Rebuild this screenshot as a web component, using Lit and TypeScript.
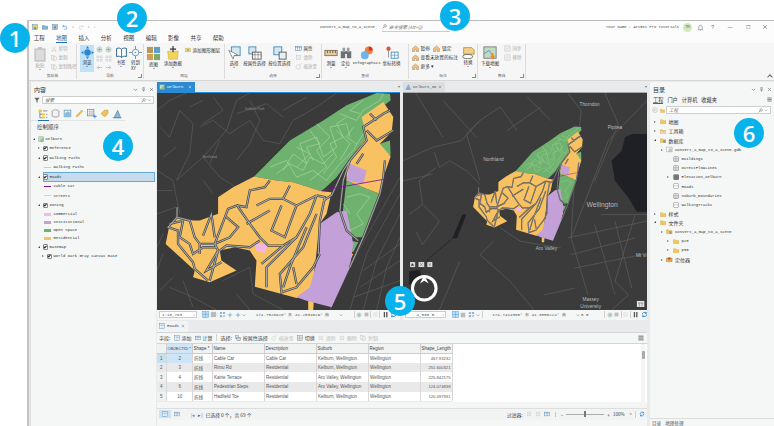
import { LitElement, html, css, svg, nothing } from "lit";
import { customElement } from "lit/decorators.js";

const I: Record<string, any> = {
  paste: svg`<rect x="3" y="3" width="10" height="12" fill="#dcdcdc" stroke="#b5b5b5"/><rect x="6" y="1" width="4" height="3" fill="#c4c4c4"/>`,
  cut: svg`<path d="M4 2l8 10M12 2L4 12" stroke="#bbb" fill="none"/><circle cx="4" cy="13" r="2" fill="none" stroke="#bbb"/><circle cx="12" cy="13" r="2" fill="none" stroke="#bbb"/>`,
  copy: svg`<rect x="2" y="2" width="8" height="10" fill="#eee" stroke="#bbb"/><rect x="6" y="5" width="8" height="10" fill="#eee" stroke="#bbb"/>`,
  explore: svg`<circle cx="8" cy="8" r="4" fill="#2c86d1"/><path d="M8 0l2 3H6zM8 16l2-3H6zM0 8l3-2v4zM16 8l-3-2v4z" fill="#2c86d1"/>`,
  zoomc: svg`<circle cx="8" cy="8" r="6" fill="#cfe3d3" stroke="#9bb"/><path d="M8 5v6M5 8h6" stroke="#777"/>`,
  dots: svg`<path d="M2 2h4v4H2zM10 2h4v4h-4zM2 10h4v4H2zM10 10h4v4h-4z" fill="none" stroke="#777" stroke-dasharray="1 1"/>`,
  left: svg`<path d="M14 8H3M7 4L3 8l4 4" fill="none" stroke="#aaa" stroke-width="1.5"/>`,
  right: svg`<path d="M2 8h11M9 4l4 4-4 4" fill="none" stroke="#aaa" stroke-width="1.5"/>`,
  book: svg`<path d="M2 3c3-1 5 0 6 1 1-1 3-2 6-1v10c-3-1-5 0-6 1-1-1-3-2-6-1z" fill="#fff" stroke="#27628f" stroke-width="1.2"/><path d="M8 4v10" stroke="#27628f"/>`,
  goto: svg`<circle cx="8" cy="8" r="4" fill="#fff" stroke="#3c8bc8"/><circle cx="8" cy="8" r="1" fill="#3c8bc8"/><path d="M8 0v4M8 12v4M0 8h4M12 8h4" stroke="#777"/>`,
  basemap: svg`<rect x="1" y="1" width="6.5" height="6.5" fill="#b59a5c"/><rect x="8.5" y="1" width="6.5" height="6.5" fill="#5f9ec8"/><rect x="1" y="8.5" width="6.5" height="6.5" fill="#d39c57"/><rect x="8.5" y="8.5" width="6.5" height="6.5" fill="#7fa86a"/>`,
  add: svg`<path d="M2 6h12l-1 9H3z" fill="#f2d45c" stroke="#c7a92f" stroke-width=".6"/><path d="M8 0v7M4.5 3.500h7" stroke="#333" stroke-width="1.3"/>`,
  graphics: svg`<rect x="2" y="3" width="12" height="10" fill="#f5dd7c" stroke="#b89c32"/><rect x="5" y="6" width="6" height="4" fill="#7aa0c5"/>`,
  select: svg`<rect x="5" y="1" width="10" height="10" fill="#d5e8f2" stroke="#3e86b5"/><path d="M2 5l5 10 1-4 4-1z" fill="#fff" stroke="#555" stroke-width=".7"/>`,
  selattr: svg`<rect x="1" y="1" width="8" height="8" fill="#d5e8f2" stroke="#3e86b5"/><rect x="5" y="7" width="10" height="8" fill="#fff" stroke="#555"/><path d="M8 7v8M11.500 7v8M5 10h10" stroke="#555" stroke-width=".6"/>`,
  selloc: svg`<rect x="1" y="1" width="9" height="9" fill="#d5e8f2" stroke="#3e86b5"/><rect x="7" y="7" width="8" height="8" fill="#e6eff4" stroke="#555"/>`,
  attr: svg`<rect x="1" y="3" width="14" height="10" fill="#fff" stroke="#2e6a99"/><path d="M1 6h14M6 3v10M10 3v10" stroke="#2e6a99" stroke-width=".8"/>`,
  clear: svg`<rect x="3" y="3" width="10" height="10" fill="none" stroke="#bbb"/><path d="M5 5l6 6M11 5l-6 6" stroke="#ccc"/>`,
  zoomto: svg`<circle cx="7" cy="9" r="5" fill="none" stroke="#bbb"/><path d="M10 5l5-4" stroke="#bbb"/>`,
  measure: svg`<rect x="1" y="5" width="14" height="6" fill="#e2c7a0" stroke="#8a7154"/><path d="M4 5v3M7 5v3M10 5v3M13 5v3" stroke="#6f5a40"/>`,
  binoc: svg`<rect x="2" y="6" width="5" height="8" fill="#6d7075"/><rect x="9" y="6" width="5" height="8" fill="#6d7075"/><rect x="4" y="2" width="3" height="5" fill="#9a9da2"/><rect x="9" y="2" width="3" height="5" fill="#9a9da2"/><rect x="7" y="6" width="2" height="3" fill="#555"/>`,
  info: svg`<circle cx="10" cy="5" r="4.500" fill="#f0803c"/><path d="M10 5V.5A4.500 4.500 0 0 1 14.500 5z" fill="#c33"/><circle cx="5.500" cy="10.500" r="4.500" fill="#6db2e8"/>`,
  coord: svg`<circle cx="4" cy="3" r="2.500" fill="#d9553c"/><path d="M4 5v8" stroke="#888"/><rect x="7" y="7" width="8" height="7" fill="#fff" stroke="#4a8bb8"/><path d="M11 7v7M7 10.500h8" stroke="#4a8bb8" stroke-width=".7"/>`,
  house: svg`<path d="M1 8l7-6 7 6v7H1z" fill="#f0c27a" stroke="#a9793a"/><path d="M5.500 15v-4h5v4" fill="#fff" stroke="#777"/>`,
  label: svg`<path d="M2 2h10l3 3v5H2z" fill="#f3cf85" stroke="#b58c42"/><ellipse cx="7" cy="13" rx="6" ry="2.600" fill="#fff" stroke="#555"/>`,
  dlmap: svg`<rect x="1" y="1" width="14" height="13" fill="#bfdcc0" stroke="#777"/><path d="M1 9l6-4 4 6" stroke="#5f8dbb" fill="none"/><path d="M11 8v5M9 11l2 3 2-3" stroke="#e98a24" stroke-width="1.600" fill="none"/>`,
  sync: svg`<rect x="2" y="2" width="12" height="12" fill="#eee" stroke="#bbb"/><path d="M4 11l8-6" stroke="#ccc"/>`,
  save: svg`<rect x="2" y="2" width="12" height="12" fill="#f1cf52" stroke="#2c6b9a"/><rect x="5" y="9" width="6" height="5" fill="#4f92c6"/>`,
  open: svg`<path d="M1 4h5l1 2h8v8H1z" fill="#88b6d8" stroke="#2c6b9a"/>`,
  saveas: svg`<rect x="2" y="2" width="12" height="12" fill="#b9bec8" stroke="#3d5f8a"/><circle cx="8" cy="9" r="3" fill="#4f92c6"/>`,
  undo: svg`<path d="M5 3L2 6l3 3M2 6h7a4 4 0 0 1 0 8H6" fill="none" stroke="#2c7fc3" stroke-width="1.500"/>`,
  redo: svg`<path d="M11 3l3 3-3 3M14 6H7a4 4 0 0 0 0 8h3" fill="none" stroke="#bcd0e0" stroke-width="1.500"/>`,
  filter: svg`<path d="M1 2h14L9.500 9v6l-3-2V9z" fill="#666"/>`,
  mag: svg`<circle cx="10" cy="6" r="4" fill="none" stroke="#555" stroke-width="1.500"/><path d="M7 9l-5 5" stroke="#555" stroke-width="1.800"/>`,
  chev: svg`<path d="M3 6l5 5 5-5" fill="none" stroke="#555" stroke-width="1.800"/>`,
  pin: svg`<path d="M5 2h6M6 2v6L4 10h8l-2-2V2M8 10v5" fill="none" stroke="#555" stroke-width="1.400"/>`,
  x: svg`<path d="M3 3l10 10M13 3L3 13" stroke="#555" stroke-width="1.500"/>`,
  xw: svg`<path d="M3 3l10 10M13 3L3 13" stroke="#fff" stroke-width="1.800"/>`,
  bell: svg`<path d="M4 11V7a4 4 0 0 1 8 0v4l1 2H3zM7 14h2" fill="none" stroke="#666" stroke-width="1.200"/>`,
  tree: svg`<rect x="1" y="1" width="5" height="4" fill="#f1c232"/><rect x="6" y="7" width="5" height="3" fill="#f1c232"/><rect x="6" y="12" width="5" height="3" fill="#f1c232"/><path d="M3 5v9h3M3 8.500h3" stroke="#555" fill="none"/><path d="M8 3h7M13 8.500h2M13 13.500h2" stroke="#555"/>`,
  cyl: svg`<ellipse cx="8" cy="4" rx="6" ry="2.500" fill="#fff" stroke="#666"/><path d="M2 4v8c0 3 12 3 12 0V4" fill="#f2f2f2" stroke="#666"/>`,
  mapdoc: svg`<rect x="2" y="2" width="12" height="12" fill="#eaf3f9" stroke="#3e7ea8"/><path d="M2 9l6-5 6 3v7H2z" fill="#8dbbd8"/>`,
  pen: svg`<path d="M2 14l1-3 9-9 2 2-9 9z" fill="#f1c232" stroke="#a9871c" stroke-width=".6"/>`,
  gridadd: svg`<rect x="1" y="1" width="10" height="10" fill="#fff" stroke="#777"/><path d="M4.500 1v10M8 1v10M1 4.500h10M1 8h10" stroke="#777" stroke-width=".6"/><path d="M12.500 9v6M9.500 12h6" stroke="#3a8ad0" stroke-width="1.400"/>`,
  tag: svg`<path d="M2 8l6-6h6v6l-6 6z" fill="#f0c45c" stroke="#b88e2a"/>`,
  snap: svg`<path d="M3 14L9 2l5 12z" fill="#8bb5d6" stroke="#37658c" stroke-width=".7"/><path d="M1 14h14" stroke="#777"/>`,
  layer: svg`<rect x="2" y="2" width="12" height="12" fill="#cfe6cc" stroke="#7a8f7a"/><path d="M2 14L14 2v12z" fill="#8fc08a"/><path d="M4 5h4" stroke="#4f92c6"/>`,
  folder: svg`<path d="M1 4h5l1 2h8v8H1z" fill="#f1c75b" stroke="#c39a2e" stroke-width=".7"/>`,
  folderc: svg`<path d="M1 4h5l1 2h8v8H1z" fill="#f1c75b" stroke="#c39a2e" stroke-width=".7"/><rect x="3" y="8" width="10" height="5" fill="#fff"/><rect x="4" y="9" width="8" height="1.500" fill="#c94d3d"/>`,
  folderg: svg`<path d="M1 4h5l1 2h8v8H1z" fill="#f1c75b" stroke="#c39a2e" stroke-width=".7"/><circle cx="11" cy="11" r="3.500" fill="#999"/>`,
  gdb: svg`<path d="M1 3h14v11H1z" fill="#fff" stroke="#777"/><circle cx="10" cy="10" r="3.500" fill="#ddd" stroke="#777"/>`,
  tbl: svg`<rect x="2" y="2" width="12" height="12" fill="#eee" stroke="#666"/><path d="M2 6h12M2 10h12M7 2v12" stroke="#888"/>`,
  raster: svg`<rect x="2" y="2" width="12" height="12" fill="#777" stroke="#444"/>`,
  line: svg`<rect x="2" y="2" width="12" height="12" fill="#fff" stroke="#666"/><path d="M2 7h12" stroke="#777"/>`,
  locator: svg`<path d="M1 5h14v9H1z" fill="#d9b04c" stroke="#9c7a26"/><circle cx="8" cy="6" r="3" fill="#cf4a3a"/>`,
  back: svg`<circle cx="8" cy="8" r="6.500" fill="none" stroke="#999"/><path d="M11 8H5M8 5L5 8l3 3" fill="none" stroke="#999"/>`,
  tblicon: svg`<rect x="1" y="2" width="14" height="12" fill="#fff" stroke="#3c7aa8"/><path d="M1 6h14M6 2v12M10.500 2v12" stroke="#3c7aa8" stroke-width=".8"/>`,
  menu: svg`<path d="M1 3h14M1 8h14M1 13h14" stroke="#555" stroke-width="2.200"/>`,
  refresh: svg`<path d="M3 8a5 5 0 0 1 9-3M13 8a5 5 0 0 1-9 3" fill="none" stroke="#2a85d0" stroke-width="2"/><path d="M13 1v5H8zM3 15v-5h5z" fill="#2a85d0"/>`,
  pause: svg`<path d="M4 2h3v12H4zM9.500 2h3v12h-3z" fill="#555"/>`,
  tile: svg`<rect x="1" y="1" width="14" height="14" fill="#bcdcf3" stroke="#4f9bd6"/><path d="M8 1v14M1 8h14" stroke="#4f9bd6"/>`,
  sq: svg`<rect x="2" y="2" width="12" height="12" fill="#bbb"/>`,
  grid3: svg`<path d="M2 2h5v5H2zM9 2h5v5H9zM2 9h5v5H2z" fill="#8fb6d2"/><path d="M9 9h5v5H9z" fill="#bcd"/>`,
  nav: svg`<path d="M2 8h12M8 2v12" stroke="#5a8fb5" stroke-width="1.600"/>`,
  sbar: svg`<rect x="7" y="0" width="2" height="16" fill="#d4a64a"/>`,
};

const icon = (n: string, s = 8) => html`<svg class="ic" style="width:${s}px;height:${s}px" viewBox="0 0 16 16">${I[n]}</svg>`;

const POLY = {
  green: ["313,288 420,180 520,120 590,75 680,38 720,40 722,60 640,125 650,170 600,235 560,290 515,332 430,305 380,300",
    "590,300 650,325 690,340 640,470 600,470 578,400 585,340", "600,480 625,485 610,515 580,500", "690,190 720,180 722,225 700,225",
    "172,440 190,405 180,445"],
  orange: ["205,350 250,320 313,288 380,300 430,305 515,332 545,335 530,400 510,430 485,640 440,652 315,618 320,540 300,510 255,500 210,510 215,540 260,570 180,605 130,590 135,570 48,490 60,430 85,410 130,420 150,420 205,400",
    "635,110 700,65 730,110 725,155 690,190 722,228 700,290 690,340 650,325 590,300 590,250 650,170",
    "590,515 610,520 595,552 583,548", "475,660 492,660 490,688 475,688"],
  purple: ["510,430 560,395 590,390 610,490 600,560 545,680 470,660 440,650 480,620 510,510", "600,250 650,270 640,310 590,300"],
  pink: ["315,490 355,490 345,518 320,510"],
};

const ROADS = [
  "M82,380 L82,410 L120,420 L135,470 L150,490 L195,490 L235,385 L262,375 L300,430 L330,470 L355,495 L400,495 L440,470 L480,400 L500,345",
  "M82,410 L55,440 L85,450 L85,490 L130,545 L135,565 L175,600",
  "M262,375 L290,380 L300,330 L345,320 L360,300",
  "M320,375 L360,355 L400,355 L440,375 L405,470 L365,450 L395,375",
  "M420,315 L400,355 M440,375 L500,345 M290,430 L360,390",
  "M195,490 L205,510 L170,570 L215,545 M160,465 L185,400 L195,470",
  "M230,410 L265,440 L240,470 L195,490",
  "M500,400 L460,500 L390,580 L395,635 L440,620 L490,560 L510,520",
  "M440,470 L350,560 L350,620 M335,550 L400,495",
  "M500,345 L525,350 L510,420 L505,520",
  "M600,240 L580,300 L570,390 L590,450 L625,480",
  "M600,240 L650,180 L640,140 L700,100 L720,90 M650,150 L680,180 L730,150 M660,100 L680,120",
  "M640,220 L620,250 M705,240 L700,290 L690,340 L640,470 L600,560",
  "M60,430 L100,420 L90,470 L120,490 L130,520 L160,500 L200,500",
  "M470,440 L445,500 L420,560 L400,620 M430,560 L440,610",
  "M520,360 L545,345 L580,270 L600,240",
  "M210,510 L230,495 L300,500 L330,480 M150,490 L150,520 M205,510 L180,600",
];

const TRAILS = [
  "M400,270 L430,220 L470,250 L450,190 L500,170 L520,230 L560,200 L540,140 L590,130 L600,170",
  "M360,260 L410,240 L440,290 L490,270 L530,300 L570,250 L610,210 L640,160",
  "M500,130 L540,170 L500,210 L530,260 L480,300 M570,100 L620,120 L640,90 L690,60 L700,40",
  "M590,350 L630,340 L660,350 L620,400 L640,430 L600,450 M600,400 L580,370",
  "M440,200 L480,220 L440,260 M560,150 L600,190 L570,240",
  "M380,280 L420,250 L460,270 L480,230 L520,250 L550,220 M480,150 L510,190 L470,200 L490,240 M610,140 L590,170 L620,190",
  "M640,60 L600,90 L630,100 M590,110 L560,130 L580,170 L540,190 L560,230 L520,280",
];

const shapes = () => svg`
  ${POLY.green.map((p) => svg`<polygon points=${p} fill="#6fb26f"/>`)}
  ${POLY.orange.map((p) => svg`<polygon points=${p} fill="#f8c161"/>`)}
  ${POLY.purple.map((p) => svg`<polygon points=${p} fill="#c4a0d8"/>`)}
  ${POLY.pink.map((p) => svg`<polygon points=${p} fill="#f3b6e2"/>`)}
  ${TRAILS.map((d) => svg`<path d=${d} fill="none" stroke="#b3e0a6" stroke-width="1.600"/>`)}
  ${ROADS.map((d) => svg`<path d=${d} fill="none" stroke="#444" stroke-width="7"/>`)}
  ${ROADS.map((d) => svg`<path d=${d} fill="none" stroke="#a8aaac" stroke-width="3"/>`)}
  <path d="M515,330 L710,295" stroke="#7f0f9e" stroke-width="2.500"/>
`;

const BG1 = [
  "M22,270 L70,300 L90,400 M80,300 L160,230 L230,150 L260,60 L300,38",
  "M160,230 L210,290 L260,320 M30,140 L60,170 L90,90 L130,130 L120,220 L80,300",
  "M150,140 L190,120 L240,160 L300,120 L340,180 L390,190 L430,120 L500,80 L560,38",
  "M300,60 L330,120 L300,190 L260,240 M190,50 L220,90 L160,130",
  "M22,330 L70,330 M22,400 L80,380 M40,520 L22,570 M60,620 L130,650 L200,688",
  "M220,600 L300,560 L310,640 L400,688 M260,640 L300,688",
  "M750,290 L620,520 L540,688 M750,340 L650,520 L600,688 M750,400 L680,540 L640,688 M750,470 L710,560 L680,688 M630,620 L750,540 M640,570 L750,490 M610,650 L750,600",
  "M400,90 L470,50 M80,200 L40,230 M120,80 L160,60 M22,90 L60,60 L110,38",
  "M210,180 L180,250 M260,100 L350,70 L400,110 M160,300 L190,340 M40,460 L22,500",
  "M100,600 L130,680 M30,630 L70,590",
];
const BG2 = [
  "M12,240 L100,200 L185,180 L240,120 L300,80 L350,150 M240,120 L200,160 L240,300",
  "M105,215 L120,260 L150,240 L200,270 L240,310 M12,300 L100,280 M50,38 L130,170 M130,60 L230,170",
  "M110,260 L60,300 L70,370 L30,400 M70,370 L120,420 L70,490 L50,450",
  "M500,38 L540,90 L520,300 L510,470 L560,640 M735,60 L620,180 L560,340 L510,470",
  "M610,38 L650,130 L580,300 M500,470 L735,420 M510,520 L700,470 M520,560 L720,520 M600,400 L735,400 M580,430 L640,640 M640,420 L690,620 M700,400 L640,600 L680,640 L630,685",
  "M300,440 L360,480 L480,500 M280,480 L240,520 L330,600 L400,685 M430,640 L520,620 M180,540 L120,685",
  "M380,50 L450,120 M320,150 L420,80",
];

const SVG1 = () => html`<svg class="mapsvg" viewBox="22 38 728 650" preserveAspectRatio="none">
  ${BG1.map((d) => svg`<path d=${d} fill="none" stroke="#5e5e5e" stroke-width="2"/>`)}
  <text x="315" y="90" class="mlab" text-anchor="middle">Kelburn Park</text>
  <text x="180" y="232" class="mlab" text-anchor="middle">Northland</text>
  ${shapes()}
</svg>`;

const SVG2 = () => html`<svg class="mapsvg" viewBox="12 38 723 647" preserveAspectRatio="none">
  <polygon points="630,240 660,210 670,170 690,160 735,160 735,392 705,392 680,350 640,300" fill="#1f1f26"/>
  <polygon points="188,400 200,400 172,470 158,472" fill="#1f1f26"/>
  <polygon points="30,570 60,566 70,590 30,610" fill="#1f1f26"/>
  <path d="M158,472 L90,530 L60,570" stroke="#1f1f26" stroke-width="2" fill="none"/>
  ${BG2.map((d) => svg`<path d=${d} fill="none" stroke="#585858" stroke-width="2.400"/>`)}
  <g transform="translate(197,118) scale(.476,.53)">${shapes()}</g>
  <text x="565" y="77" class="mlab2" text-anchor="middle">Thorndon</text>
  <text x="640" y="146" class="mlab2" text-anchor="middle">Pipitea</text>
  <text x="280" y="242" class="mlab2" text-anchor="middle">Northland</text>
  <text x="602" y="379" class="mlab3" text-anchor="middle">Wellington</text>
  <text x="437" y="505" class="mlab2" text-anchor="middle">Aro Valley</text>
  <text x="718" y="526" class="mlab2" text-anchor="middle">Mt Vi</text>
  <text x="568" y="657" class="mlab2" text-anchor="middle">Massey</text>
  <text x="568" y="678" class="mlab2" text-anchor="middle">University</text>
  <rect x="33" y="542" width="15" height="15" fill="#ddd"/><rect x="58" y="542" width="17" height="15" fill="#ddd"/><rect x="84" y="542" width="15" height="15" fill="#ddd"/>
  <path d="M36,552 l4,-6 4,6z M62,545 l9,9 M71,545 l-9,9 M88,546 l7,7 M95,546 l-7,7" stroke="#333" fill="#333" stroke-width="1"/>
  <circle cx="75" cy="620" r="35" fill="none" stroke="#fff" stroke-width="9"/>
  <path d="M75,582 L62,606 L75,598 L88,606z" fill="#fff"/>
  <rect x="705" y="658" width="22" height="18" fill="#e5e5e5"/><path d="M708,664 h16 M712,664 v11 M720,664 v11" stroke="#555" stroke-width="1.500"/>
</svg>`;

const layers: any[] = [
  ["c", 1, "Kelburn"],
  ["r", 6, "Reference"],
  ["e", 6, "Walking Paths"],
  ["l", "#b5dca8", "Walking Paths", "line"],
  ["e", 6, "Roads", "sel"],
  ["l", "#7f0f9e", "Cable Car", "line"],
  ["l", "#cfd0d0", "Streets", "line"],
  ["e", 6, "Zoning"],
  ["l", "#f8b8e6", "Commercial", "box"],
  ["l", "#c4a0d8", "Institutional", "box"],
  ["l", "#6fb26f", "Open Space", "box"],
  ["l", "#f8c161", "Residential", "box"],
  ["e", 6, "Basemap"],
  ["r", 10, "World Dark Gray Canvas Base"],
];

const cat: any[] = [
  [0, "r", "folder", "地图"], [0, "r", "folderc", "工具箱"], [0, "d", "folderg", "数据库"],
  [1, "r", "gdb", "Convert_a_map_to_a_scene.gdb", 1],
  [2, "", "tbl", "Buildings", 1], [2, "", "tbl", "DirectFlowLines", 1], [2, "r", "raster", "Elevation_Kelburn", 1],
  [2, "", "line", "Roads", 1], [2, "", "tbl", "Suburb_Boundaries", 1], [2, "", "line", "WalkingTracks", 1],
  [0, "r", "folder", "样式", 0, 1], [0, "d", "folder", "文件夹"],
  [1, "r", "folderg", "Convert_a_map_to_a_scene", 1],
  [2, "r", "folder", "p20", 1], [2, "r", "folder", "p30", 1],
  [1, "r", "locator", "定位器"],
];

const rows = [
  ["1", "2", "折线", "Cable Car", "Cable Car", "Kelburn, Wellington", "Wellington", "467.93232"],
  ["2", "3", "折线", "Rimu Rd", "Residential", "Kelburn, Wellington", "Wellington", "251.600321"],
  ["3", "4", "折线", "Kairie Terrace", "Residential", "Aro Valley, Wellington", "Wellington", "225.842175"],
  ["4", "6", "折线", "Pedestrian Steps", "Residential", "Aro Valley, Wellington", "Wellington", "124.074838"],
  ["5", "10", "折线", "Hadfield Tce", "Residential", "Kelburn, Wellington", "Wellington", "120.497931"],
];

@customElement("app-root")
export class AppRoot extends LitElement {
  static styles = css`
    :host { display: block; width: 774px; height: 426px; overflow: hidden; position: relative; background: #fff;
      font-family: "Liberation Sans", "Noto Sans CJK SC", sans-serif; color: #444; }
    .ic { display: block; flex: none; }
    .win { position: absolute; left: 27px; top: 20px; right: 0; bottom: 0; border-top: 1px solid #bcbcbc; border-left: 2px solid #c4c4c4;
      display: flex; flex-direction: column; background: #e8eaec; }
    .title { height: 12px; display: flex; align-items: center; background: #fcfcfc; padding-left: 3px; font: 3.800px "Liberation Mono", monospace; color: #444; flex: none; }
    .qa { display: flex; gap: 4px; align-items: center; width: 288px; flex: none; }
    .doc { width: 62px; flex: none; white-space: nowrap; }
    .search { width: 68px; height: 9px; border-bottom: 1px solid #ccc; display: flex; align-items: center; gap: 2px; font: italic 4.500px "Noto Sans CJK SC", sans-serif; color: #777; flex: none; }
    .user { margin-left: auto; display: flex; align-items: center; white-space: nowrap; }
    .avatar { width: 9px; height: 9px; border-radius: 50%; background: #d4e8bd; font: 3.500px "Liberation Sans", sans-serif; display: grid; place-items: center; color: #456; margin: 0 5px 0 4px; }
    .winbtn { width: 17.500px; display: grid; place-items: center; font: 5px "Liberation Sans", sans-serif; color: #666; }
    .tabs { height: 10px; flex: none; display: flex; background: #fcfcfc; font: 5.500px "Noto Sans CJK SC", sans-serif; color: #333; align-items: center; }
    .tabs span { width: 22.400px; text-align: center; line-height: 8px; position: relative; flex: none; }
    .tabs span.first { margin-left: -1px; }
    .tabs span.on { color: #1d5f98; }
    .tabs span.on::after { content: ""; position: absolute; left: 6px; right: 6px; bottom: -1px; height: 1px; background: #1b6fb8; }
    .ribbon { height: 37px; flex: none; display: flex; background: #f6f6f6; border-bottom: 1px solid #d6d6d6; position: relative; font: 5px "Noto Sans CJK SC", sans-serif; color: #333; }
    .grp { flex: none; border-right: 1px solid #dcdcdc; display: flex; flex-direction: column; margin: 1px 0; position: relative; }
    .gbody { flex: 1; display: flex; gap: 2px; padding: 1px 2px 0; min-height: 0; }
    .glabel { height: 6px; line-height: 6px; text-align: center; font-size: 3.800px; color: #666; }
    .launch { position: absolute; right: 1px; bottom: 1px; width: 3px; height: 3px; border-right: 1px solid #888; border-bottom: 1px solid #888; }
    .big { display: flex; flex-direction: column; align-items: center; width: 18px; font-size: 4.500px; line-height: 6px; flex: none; white-space: nowrap; padding-top: 1px; }
    .big.sel { background: #bfe2f7; height: 26px; width: 14px; }
    .big.dis { color: #aaa; }
    .car { width: 0; height: 0; border: 1.500px solid transparent; border-top-color: #666; border-bottom: 0; margin-top: 1px; }
    .col { display: flex; flex-direction: column; gap: 1.500px; font-size: 4.500px; line-height: 7px; white-space: nowrap; }
    .item { display: flex; align-items: center; gap: 1.500px; height: 7.500px; }
    .item.dis { color: #aaa; }
    .gridn { display: grid; grid-template-columns: 7px 7px; gap: 2px; align-content: start; padding-top: 1px; margin-right: 1px; }
    .colla { position: absolute; right: 2px; bottom: 1px; width: 3px; height: 3px; border-left: 1px solid #666; border-top: 1px solid #666; transform: rotate(45deg); }

    .work { flex: 1; min-height: 0; display: flex; padding-top: 1px; }
    .panel { background: #f5f6f6; display: flex; flex-direction: column; flex: none; }
    .left { width: 125px; margin-left: 1px; border-left: 1px solid #dedede; }
    .right { width: 124px; margin-left: 3px; }
    .phead { height: 11px; display: flex; align-items: center; padding: 2px 2px 0 3px; font: 6px "Noto Sans CJK SC", sans-serif; color: #333; gap: 3px; flex: none; }
    .phead b { font-weight: 400; flex: 1; }
    .fil { display: flex; gap: 2px; align-items: center; padding: 0 2px 0 3px; height: 10px; flex: none; }
    .sbox { flex: 1; height: 8.500px; background: #fff; border: 1px solid #cdcdcd; display: flex; align-items: center; padding: 0 2px; font: italic 4.500px "Noto Sans CJK SC", sans-serif; color: #666; gap: 1.500px; box-sizing: border-box; }
    .sbox i { flex: 1; }
    .itabs { display: flex; gap: 3px; padding: 4px 0 0 7px; margin-right: 31px; height: 11px; border-bottom: 1px solid #e2e4e4; flex: none; position: relative; }
    .itabs::after { content: ""; position: absolute; left: 7px; bottom: -1px; width: 11px; height: 1px; background: #1b6fb8; }
    .dorder { font: 5.500px "Noto Sans CJK SC", sans-serif; padding: 1px 0 0 6px; height: 10px; line-height: 9px; color: #444; flex: none; margin-top: 1px; }
    .tree { font: 3.950px "Liberation Mono", monospace; color: #333; flex: 1; padding-top: 1px; }
    .tr { display: flex; align-items: center; height: 9.500px; gap: 1.500px; box-sizing: border-box; white-space: nowrap; }
    .tr.leg { height: 8px; padding-left: 13px; gap: 3px; }
    .tr.leg.tall { height: 9.500px; }
    .selbox { flex: 1; align-self: stretch; display: flex; align-items: center; gap: 1.500px; background: #c6dbec; outline: 1px solid #66a9db; outline-offset: -1px; margin-right: 1px; }
    .tw { width: 4px; display: grid; place-items: center; flex: none; }
    .tri-r { width: 0; height: 0; border-left: 2px solid #777; border-top: 1.500px solid transparent; border-bottom: 1.500px solid transparent; }
    .tri-d { width: 0; height: 0; border-right: 2px solid #444; border-top: 2px solid transparent; }
    .chk { width: 5.500px; height: 5.500px; border: 1px solid #888; background: #fff; border-radius: 1px; flex: none; box-sizing: border-box; display: grid; place-items: center; }
    .chk::after { content: ""; width: 2px; height: 1px; border-left: 1px solid #222; border-bottom: 1px solid #222; transform: rotate(-45deg) translate(0, -.5px); }
    .sw { width: 6.500px; flex: none; }
    .sw.line { height: 1px; }
    .sw.box { height: 3px; }
    .center { width: 490px; margin-left: 1px; flex: none; display: flex; flex-direction: column; }
    .maps { display: flex; gap: 3px; flex: none; }
    .mp { flex: none; display: flex; flex-direction: column; }
    .mp.a { width: 243px; }
    .mp.b { width: 244px; }
    .mtabs { height: 9.500px; display: flex; align-items: center; flex: none; }
    .mtabs .more { margin-left: auto; font-size: 4px; color: #777; }
    .mtab { height: 9.500px; padding: 0 3px 0 2px; display: flex; align-items: center; gap: 2px; font: 3.900px "Liberation Mono", monospace; white-space: nowrap; }
    .mtab.on { background: #2a8bd2; color: #fff; width: 33px; }
    .mtab.on .ic:last-child { margin-left: auto; }
    .mtab.off { background: #dcdfe1; color: #555; }
    .canvas { height: 217px; background: #3a3a3a; border-top: 1px solid #2a8bd2; overflow: hidden; flex: none; }
    .mp.b .canvas { border-top-color: #aaa; background: #3b3b3b; }
    .mapsvg { display: block; width: 100%; height: 100%; }
    .mlab { fill: #8d8d8d; font: 10px "Liberation Sans", sans-serif; }
    .mlab2 { fill: #bdbdbd; font: 14px "Liberation Sans", sans-serif; }
    .mlab3 { fill: #b8b8b8; font: 20px "Liberation Sans", sans-serif; }
    .stat { height: 10px; flex: none; background: #f5f6f6; display: flex; align-items: center; gap: 1.500px; font: 4.200px "Liberation Mono", monospace; color: #555; white-space: nowrap; padding-left: 2px; }
    .cb { width: 38px; height: 7.500px; background: #fff; border: 1px solid #ccc; display: flex; align-items: center; justify-content: space-between; padding: 0 1px 0 2px; box-sizing: border-box; margin-right: 3px; flex: none; }
    .cb.r { width: 41px; justify-content: flex-end; gap: 8px; margin-right: 4px; }
    .cb span { font-size: 3px; }
    .coord { width: 90px; text-align: center; flex: none; }
    .sep { width: 1px; height: 7px; background: #d0d0d0; flex: none; }
    .sep.gap10 { margin-left: 9px; }
    .sep.gap14 { margin-left: 14px; }
    .tpane { flex: 1; min-height: 0; margin-top: 1px; display: flex; flex-direction: column; background: #f5f6f6; }
    .ttabs { height: 11px; flex: none; background: #e8eaec; display: flex; }
    .ttab { background: #f2f3f4; height: 11px; width: 31px; display: flex; align-items: center; gap: 2px; padding-left: 2px; font: 4px "Liberation Mono", monospace; box-sizing: border-box; }
    .tbar { height: 12px; flex: none; display: flex; align-items: center; gap: 3.500px; padding: 0 3px 0 2px; border-top: 1px solid #d2d4d5; border-bottom: 1px solid #d2d4d5; font: 5px "Noto Sans CJK SC", sans-serif; color: #444; box-sizing: border-box; white-space: nowrap; }
    .tb { display: flex; align-items: center; gap: 1.500px; }
    .tb.d { color: #bbb; }
    .tbar .sp { flex: 1; }
    .tbody { flex: none; height: 58px; background: #fff; position: relative; overflow: hidden; }
    table { border-collapse: collapse; table-layout: fixed; width: 295px; font: 4.500px "Liberation Sans", "Noto Sans CJK SC", sans-serif; color: #555; }
    th { height: 9.500px; background: #f1f2f2; font-weight: 400; text-align: left; padding: 0 0 0 1px; border-right: 1px solid #cfcfcf; border-bottom: 1px solid #ccc; color: #444; white-space: nowrap; overflow: hidden; box-sizing: border-box; }
    td { height: 9.700px; padding: 0 0 0 1.500px; border-right: 1px solid #d8d8d8; white-space: nowrap; overflow: hidden; box-sizing: border-box; }
    tr.g td { background: #e9e9e9; }
    td.rh, th.rh { background: #f0f1f1; text-align: center; padding: 0; }
    td.rh.first { background: #c4e0f3; }
    td.id { text-align: center; }
    td.num { text-align: right; padding-right: 1px; font-size: 4.200px; }
    td.cur { background: #cde5f6; }
    th.hl { background: #cfe6f6; font-size: 4.200px; }
    .stub { height: 9.700px; background: #e9e9e9; }
    .vs { position: absolute; right: 2px; top: 0; bottom: 0; width: 4px; background: #f4f4f4; }
    .vs::after { content: ""; position: absolute; top: 7px; left: .5px; width: 3px; height: 8px; background: #aaa; border-radius: 1px; }
    .hs { height: 6px; flex: none; background: #f4f5f5; }
    .tfoot { height: 11px; flex: none; display: flex; align-items: center; gap: 3px; padding: 0 2px; background: #f2f3f3; border-top: 1px solid #ddd; font: 4.800px "Noto Sans CJK SC", sans-serif; color: #444; white-space: nowrap; }
    .fbtn { background: #cbe3f4; width: 12px; height: 8px; display: grid; place-items: center; }
    .nv1 { margin-left: 8px; color: #888; }
    .nv2 { color: #666; }
    .grow { flex: 1; }
    .slider { width: 38px; height: 1px; background: #aaa; position: relative; }
    .slider::after { content: ""; position: absolute; left: 18px; top: -2.500px; width: 2px; height: 6px; background: #777; }
    .pct { width: 14px; font-size: 4.500px; }
    .tiny { font-size: 3px; }
    .ctabs { display: flex; gap: 4px; padding: 0 2px 0 3px; height: 9px; align-items: center; font: 5.200px "Noto Sans CJK SC", sans-serif; color: #333; flex: none; position: relative; }
    .ctabs::after { content: ""; position: absolute; left: 3px; bottom: 0; width: 10px; height: 1px; background: #1b6fb8; }
    .ctabs i { flex: 1; }
    .csearch { display: flex; align-items: center; gap: 1.500px; padding: 1px 3px 0 2px; height: 10px; flex: none; }
    .ctree { padding-top: 2px; flex: 1; font: 3.950px "Liberation Mono", monospace; color: #333; }
    .ctree .tr { height: 9.300px; gap: 2.500px; }
    .ctree .tr.short { height: 7.800px; }
    .ctree .zh { font: 5px "Noto Sans CJK SC", sans-serif; color: #333; }
    .cfoot { height: 7px; flex: none; font: 4.600px "Noto Sans CJK SC", sans-serif; display: flex; gap: 4px; padding-left: 2px; border-top: 1px solid #ddd; align-items: center; color: #555; }
    .badge { position: absolute; width: 30px; height: 30px; border-radius: 50%; background: #08b3ec; color: #fff; font: 600 22px/30px "Open Sans", sans-serif; text-align: center; transform: translate(-50%, -50%); }
  `;

  private ribbon() {
    return html`<div class="ribbon">
      <div class="grp" style="width:47px"><div class="gbody">
        <div class="big dis">${icon("paste", 16)}粘贴<span class="car"></span></div>
        <div class="col"><div class="item dis">${icon("cut", 6)}剪切</div><div class="item dis">${icon("copy", 6)}复制</div><div class="item dis">${icon("copy", 6)}复制路径</div></div>
      </div><div class="glabel">剪贴板</div></div>
      <div class="grp" style="width:66px"><div class="gbody" style="padding-left:3px">
        <div class="big sel">${icon("explore", 13)}浏览<span class="car"></span></div>
        <div class="gridn">${icon("zoomc", 7)}${icon("zoomc", 7)}${icon("dots", 7)}${icon("dots", 7)}${icon("left", 7)}${icon("right", 7)}</div>
        <div class="big" style="width:12px">${icon("book", 13)}书签<span class="car"></span></div>
        <div class="big" style="width:13px">${icon("goto", 13)}转到<br />XY</div>
      </div><div class="glabel">导航</div><span class="launch"></span></div>
      <div class="grp" style="width:80px"><div class="gbody">
        <div class="big" style="width:15px">${icon("basemap", 15)}底图<span class="car"></span></div>
        <div class="big" style="width:20px">${icon("add", 14)}添加数据<span class="car"></span></div>
        <div class="item" style="align-self:flex-start;margin-top:1px;font-size:4.600px;white-space:nowrap">${icon("graphics", 6)}添加图形图层</div>
      </div><div class="glabel">图层</div></div>
      <div class="grp" style="width:96px"><div class="gbody">
        <div class="big" style="width:14px">${icon("select", 14)}选择<span class="car"></span></div>
        <div class="big" style="width:23px">${icon("selattr", 14)}按属性选择</div>
        <div class="big" style="width:23px">${icon("selloc", 14)}按位置选择</div>
        <div class="col" style="margin-left:2px"><div class="item">${icon("attr", 7)}属性</div><div class="item dis">${icon("clear", 7)}清除</div><div class="item dis">${icon("zoomto", 7)}缩放至</div></div>
      </div><div class="glabel">选择</div><span class="launch"></span></div>
      <div class="grp" style="width:86px"><div class="gbody" style="gap:1px">
        <div class="big" style="width:14px">${icon("measure", 14)}测量<span class="car"></span></div>
        <div class="big" style="width:13px">${icon("binoc", 14)}定位<span class="car"></span></div>
        <div class="big" style="width:27px;font:3.900px 'Liberation Mono',monospace;line-height:7px">${icon("info", 14)}Infographics</div>
        <div class="big" style="width:21px">${icon("coord", 14)}坐标转换</div>
      </div><div class="glabel">查询</div></div>
      <div class="grp" style="width:68px"><div class="gbody" style="gap:0">
        <div class="col" style="width:49px;padding-left:1px;font-size:4.700px">
          <div class="item">${icon("house", 7)}暂停&nbsp;&nbsp;${icon("house", 7)}锁定</div>
          <div class="item">${icon("house", 7)}查看未放置的标注</div>
          <div class="item">${icon("house", 7)}更多 ▾</div>
        </div>
        <div class="big" style="width:14px">${icon("label", 13)}转换<span class="car"></span></div>
      </div><div class="glabel">标注</div><span class="launch"></span></div>
      <div class="grp" style="width:47px"><div class="gbody" style="gap:3px">
        <div class="big" style="width:20px">${icon("dlmap", 14)}下载地图<span class="car"></span></div>
        <div class="col" style="margin-left:1px"><div class="item dis">${icon("sync", 7)}同步</div><div class="item dis">${icon("sync", 7)}移除</div></div>
      </div><div class="glabel">离线</div><span class="launch"></span></div>
      <span class="colla"></span>
    </div>`;
  }

  private layerRow(r: any[]) {
    const [k] = r;
    if (k === "l") {
      return html`<div class="tr leg ${r[3] === "line" ? "tall" : ""}"><span class="sw ${r[3]}" style="background:${r[1]}"></span>${r[2]}</div>`;
    }
    const tw = html`<span class="tw">${k === "r" ? html`<i class="tri-r"></i>` : html`<i class="tri-d"></i>`}</span>`;
    const box = k === "c" ? icon("layer", 6.5) : html`<span class="chk"></span>`;
    return html`<div class="tr" style="padding-left:${r[1]}px">
      ${tw}
      ${r[3] === "sel" ? html`<div class="selbox"><span class="chk"></span>${r[2]}</div>` : html`${box}${r[2]}`}
    </div>`;
  }

  render() {
    return html`
    <div class="win">
      <div class="title">
        <div class="qa">${icon("save", 6)}${icon("open", 6)}${icon("saveas", 6)}${icon("undo", 6)}<span class="tiny">▾</span>${icon("redo", 6)}<span class="tiny">▾</span><span class="tiny">▿</span></div>
        <div class="doc">Convert_a_map_to_a_scene</div>
        <div class="search">${icon("mag", 5)}命令搜索 (Alt+Q)</div>
        <div class="user">Your Name - ArcGIS Pro Tutorials<span class="avatar">TR</span>${icon("bell", 7)}<span class="winbtn">?</span><span class="winbtn">—</span><span class="winbtn">☐</span><span class="winbtn">${icon("x", 6)}</span></div>
      </div>
      <div class="tabs">
        <span class="first">工程</span><span class="on">地图</span><span>插入</span><span>分析</span><span>视图</span><span>编辑</span><span>影像</span><span>共享</span><span>帮助</span>
      </div>
      ${this.ribbon()}
      <div class="work">
        <div class="panel left">
          <div class="phead"><b>内容</b>${icon("chev", 5)}${icon("pin", 5)}${icon("x", 5)}</div>
          <div class="fil">${icon("filter", 6)}<div class="sbox">搜索<i></i>${icon("mag", 5)}${icon("chev", 4)}</div></div>
          <div class="itabs">${icon("tree", 10)}${icon("cyl", 9)}${icon("mapdoc", 9)}${icon("pen", 9)}${icon("gridadd", 10)}${icon("tag", 9)}${icon("snap", 10)}</div>
          <div class="dorder">绘制顺序</div>
          <div class="tree">${layers.map((r) => this.layerRow(r))}</div>
        </div>
        <div class="center">
          <div class="maps">
            <div class="mp a">
              <div class="mtabs"><div class="mtab on">${icon("layer", 6)}Kelburn${icon("xw", 4)}</div><span class="more">▾</span></div>
              <div class="canvas">${SVG1()}</div>
              <div class="stat">
                <div class="cb">1:10,763<span>▾</span></div>
                ${icon("tile", 7)}${icon("sq", 7)}${icon("grid3", 7)}${icon("nav", 6)}${icon("nav", 6)}${icon("chev", 4)}
                <span class="coord">174.7526926° 东 41.2834029° 南</span>${icon("chev", 4)}
                <span class="sep gap10"></span>${icon("zoomc", 6)}${icon("sq", 5)}<span class="sep"></span>${icon("clear", 5)}<span class="sep"></span>${icon("pause", 7)}${icon("refresh", 7)}
              </div>
            </div>
            <div class="mp b">
              <div class="mtabs"><div class="mtab off">${icon("snap", 6)}Kelburn_3D ${icon("x", 4)}</div><span class="more">▾</span></div>
              <div class="canvas">${SVG2()}</div>
              <div class="stat">
                <div class="cb r">4,568 m<span>▾</span></div>
                ${icon("tile", 7)}${icon("sq", 6)}${icon("grid3", 7)}${icon("chev", 4)}<span class="sep"></span>
                <span class="coord">174.7414368° 东 41.3055224° 南</span>${icon("chev", 4)}
                <span>0 m</span><span class="sep gap14"></span>${icon("zoomc", 6)}${icon("sq", 5)}<span class="sep"></span>${icon("clear", 5)}<span class="sep"></span>${icon("pause", 7)}${icon("refresh", 7)}
              </div>
            </div>
          </div>
          <div class="tpane">
            <div class="ttabs"><div class="ttab">${icon("tblicon", 6)}Roads ${icon("x", 4)}</div></div>
            <div class="tbar">
              <span>字段:</span>
              <span class="tb">${icon("tblicon", 6)}添加</span>
              <span class="tb">${icon("attr", 6)}计算</span>
              <span class="sep"></span>
              <span>选择:</span>
              <span class="tb">${icon("selattr", 6)}按属性选择</span>
              <span class="tb d">${icon("zoomto", 6)}缩放至</span>
              <span class="tb">${icon("tbl", 6)}切换</span>
              <span class="tb d">${icon("clear", 6)}清除</span>
              <span class="tb d">${icon("clear", 6)}删除</span>
              <span class="tb d">${icon("copy", 6)}复制</span>
              <span class="sp"></span>${icon("menu", 6)}
            </div>
            <div class="tbody">
              <table>
                <colgroup><col style="width:9px"/><col style="width:26px"/><col style="width:20px"/><col style="width:52px"/><col style="width:52px"/><col style="width:52px"/><col style="width:52px"/><col style="width:32px"/></colgroup>
                <tr><th class="rh"></th><th class="hl">OBJECTID *</th><th>Shape *</th><th>Name</th><th>Description</th><th>Suburb</th><th>Region</th><th>Shape_Length</th></tr>
                ${rows.map((r, i) => html`<tr class=${i % 2 ? "g" : ""}>
                  <td class="rh ${i === 0 ? "first" : ""}">${r[0]}</td>
                  <td class="id ${i === 0 ? "cur" : ""}">${r[1]}</td>
                  <td>${r[2]}</td><td>${r[3]}</td><td>${r[4]}</td><td>${r[5]}</td><td>${r[6]}</td><td class="num">${r[7]}</td>
                </tr>`)}
              </table>
              <div class="stub" style="width:295px"></div>
              <div class="vs"></div>
            </div>
            <div class="hs"></div>
            <div class="tfoot">
              <span class="fbtn">${icon("tblicon", 6)}</span>${icon("attr", 6)}<span class="nv1">|◂</span><span class="nv2">▸|</span>
              <span>已选择 0 个，共 69 个</span>
              <span class="grow"></span>
              <span>过滤器:</span>${icon("clear", 6)}${icon("clear", 6)}${icon("attr", 6)}${icon("sbar", 5)}
              <span>−</span><span class="slider"></span><span>+</span><span class="pct">100%</span><span class="tiny">▾</span><span class="sep"></span>${icon("refresh", 6)}
            </div>
          </div>
        </div>
        <div class="panel right">
          <div class="phead"><b>目录</b>${icon("chev", 5)}${icon("pin", 5)}${icon("x", 5)}</div>
          <div class="ctabs"><span>工程</span><span>门户</span><span>计算机</span><span>收藏夹</span><i></i>${icon("menu", 5)}</div>
          <div class="csearch">${icon("back", 6)}${icon("folder", 5)}<div class="sbox">工程<i></i>${icon("mag", 5)}${icon("chev", 4)}</div></div>
          <div class="ctree">
            ${cat.map((c) => html`<div class="tr ${c[5] ? "short" : ""}" style="padding-left:${c[0] * 6.5 + 3}px">
              <span class="tw">${c[1] === "r" ? html`<i class="tri-r"></i>` : c[1] === "d" ? html`<i class="tri-d"></i>` : nothing}</span>
              ${icon(c[2], 6.5)}<span class=${c[4] ? "" : "zh"}>${c[3]}</span>
            </div>`)}
          </div>
          <div class="cfoot"><span>目录</span><span>地理处理</span></div>
        </div>
      </div>
    </div>
    <div class="badge" style="left:15px;top:38px">1</div>
    <div class="badge" style="left:132px;top:18px">2</div>
    <div class="badge" style="left:455px;top:16px">3</div>
    <div class="badge" style="left:118px;top:146px">4</div>
    <div class="badge" style="left:400px;top:301px">5</div>
    <div class="badge" style="left:749px;top:133px">6</div>
    `;
  }
}
